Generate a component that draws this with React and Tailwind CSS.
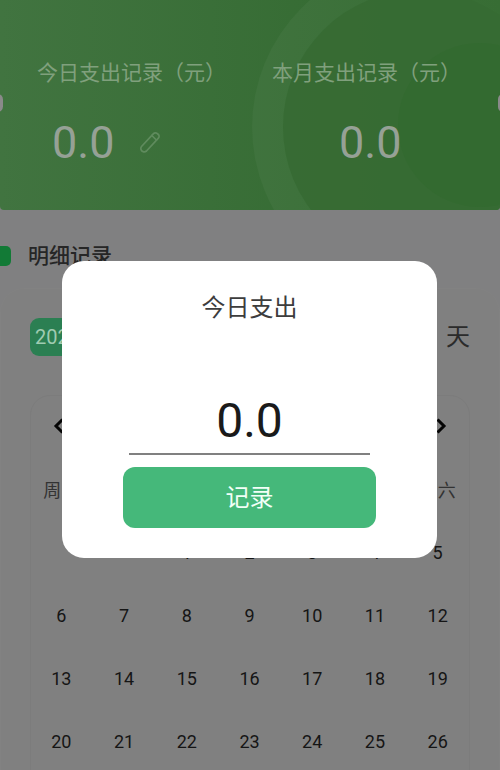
const cjk = { fontFamily: 'Roboto, "Noto Sans CJK SC", sans-serif' };

const days = [
  '', '', 1, 2, 3, 4, 5,
  6, 7, 8, 9, 10, 11, 12,
  13, 14, 15, 16, 17, 18, 19,
  20, 21, 22, 23, 24, 25, 26,
];
const weeks = ['周日', '周一', '周二', '周三', '周四', '周五', '周六'];

function Pencil() {
  return (
    <svg width="24" height="24" viewBox="0 0 24 24" fill="none" stroke="#5f8b5d" strokeWidth="1.7" strokeLinejoin="round" strokeLinecap="round">
      <path d="M3.500 16.500 15.500 3.600a2.600 2.600 0 0 1 3.700-.1l1.100 1a2.600 2.600 0 0 1 .1 3.700L8.500 21a3.300 3.300 0 0 1-3.400.6 3.400 3.400 0 0 1-2.200-2.400 3 3 0 0 1 .6-2.700Z" />
      <path d="M13.800 5.500l4.600 4.500" />
    </svg>
  );
}

function Chevron({ left }) {
  return (
    <svg width="12" height="18" viewBox="0 0 12 18" fill="none" stroke="#050505" strokeWidth="3" strokeLinejoin="miter">
      <path d={left ? 'M9.500 2.500 3 9l6.500 6.500' : 'M2.500 2.500 9 9l-6.500 6.500'} />
    </svg>
  );
}

export default function App() {
  return (
    <div className="relative w-[500px] h-[770px] overflow-hidden bg-[#808081]" style={cjk}>
      <header className="relative h-[210px] overflow-hidden rounded-b-[4px] bg-gradient-to-r from-[#417440] to-[#30682d]">
        <svg className="absolute inset-0" width="500" height="210" viewBox="0 0 500 210" fill="none">
          <circle cx="420" cy="127" r="168" fill="#ffffff" fillOpacity="0.035" />
          <circle cx="420" cy="127" r="137" fill="#366a33" fillOpacity="0.9" />
          <circle cx="480" cy="125" r="82" fill="#2f692c" fillOpacity="0.35" />
        </svg>
        <div className="relative grid grid-cols-[254px_246px] pt-[58px]">
          <div className="flex flex-col items-start pl-[37px]">
            <span className="text-[21px] leading-[30px] text-[#80a07d] whitespace-nowrap">今日支出记录（元）</span>
            <div className="flex items-center mt-[28px] pl-[15px]">
              <span className="text-[45px] leading-[54px] text-[#96a196]">0.0</span>
              <span className="ml-[24px] mt-[-2px]"><Pencil /></span>
            </div>
          </div>
          <div className="flex flex-col items-start pl-[18px]">
            <span className="text-[21px] leading-[30px] text-[#80a07d] whitespace-nowrap">本月支出记录（元）</span>
            <span className="text-[45px] leading-[54px] mt-[28px] ml-[67px] text-[#96a196]">0.0</span>
          </div>
        </div>
        <span className="absolute left-[-8px] top-[94px] w-[11px] h-[18px] rounded-full bg-[#8a8a8a]" />
        <span className="absolute right-[-8px] top-[94px] w-[10px] h-[18px] rounded-full bg-[#8a8a8a]" />
      </header>

      <div className="flex items-center h-[30px] mt-[31px]">
        <span className="w-[11px] h-[20px] rounded-r-[5px] bg-[#127a36]" />
        <span className="ml-[17px] text-[21px] leading-[30px] font-medium text-[#262626]">明细记录</span>
      </div>

      <section className="mt-[17px] h-[500px] rounded-t-[24px] border border-[#828282] bg-[#808080] px-[29px] pt-[29px]">
        <div className="flex items-center justify-between h-[38px]">
          <span className="flex items-center h-[38px] px-[5px] rounded-[9px] bg-[#2b7f52] text-[20px] text-[#9fcbb1] whitespace-nowrap">2021年6月</span>
          <span className="text-[24px] text-[#2b2b2b] whitespace-nowrap">
            <span>已记录 0</span>
            <span className="ml-[14px]">天</span>
          </span>
        </div>

        <div className="mt-[39px] h-[420px] rounded-[20px] border border-[#7c7c7c] w-[440px]">
          <div className="flex items-center justify-between h-[60px] px-[22px]">
            <Chevron left />
            <Chevron />
          </div>
          <div className="grid grid-cols-7 h-[46px] items-center mt-[11px] ml-[-1px]">
            {weeks.map((w) => (
              <span key={w} className="text-center text-[18px] text-[#333333]">{w}</span>
            ))}
          </div>
          <div className="grid grid-cols-7 auto-rows-[63px] items-center mt-[8px] ml-[-1px]">
            {days.map((d, i) => (
              <span key={i} className="text-center text-[18px] leading-[24px] text-[#151515]">{d}</span>
            ))}
          </div>
        </div>
      </section>

      <div className="absolute left-[62px] top-[261px] w-[375px] h-[297px] rounded-[22px] bg-white flex flex-col items-center pt-[30px]">
        <h2 className="text-[24px] leading-[34px] font-normal text-[#3d3d3d]">今日支出</h2>
        <div className="mt-[64px] w-[241px] h-[66px] border-b-2 border-[#808080] text-center text-[48px] leading-[64px] text-[#1a1a1a]">0.0</div>
        <button className="mt-[12px] w-[253px] h-[61px] rounded-[12px] bg-[#45b87a] text-[24px] text-[#f2fff7]">记录</button>
      </div>
    </div>
  );
}
